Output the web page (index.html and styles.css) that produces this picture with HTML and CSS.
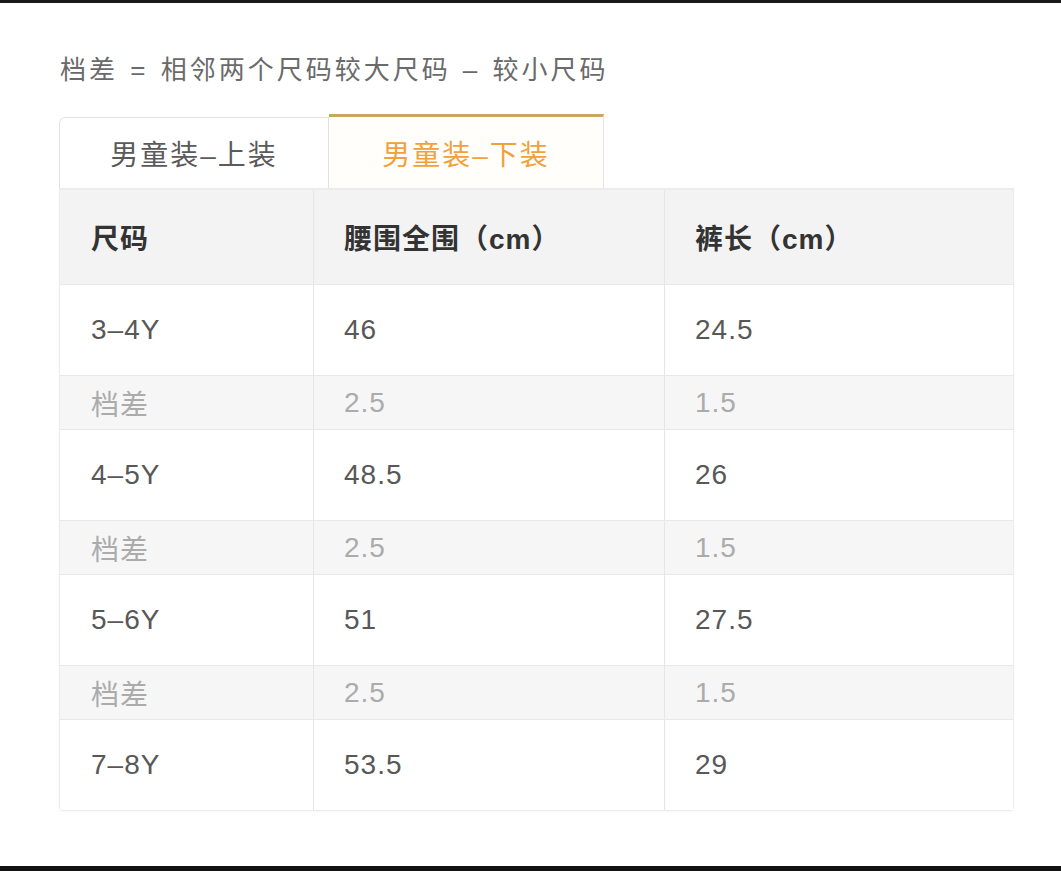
FILE: index.html
```html
<!DOCTYPE html>
<html lang="zh">
<head>
<meta charset="utf-8">
<title>尺码表</title>
<link rel="stylesheet" href="styles.css">
</head>
<body>
<main class="page">
  <p class="note">档差 = 相邻两个尺码较大尺码 – 较小尺码</p>
  <div class="tabs">
    <div class="tab">男童装–上装</div>
    <div class="tab active">男童装–下装</div>
  </div>
  <div class="table">
    <div class="row head">
      <div class="cell">尺码</div>
      <div class="cell">腰围全围（cm）</div>
      <div class="cell">裤长（cm）</div>
    </div>
    <div class="row data">
      <div class="cell">3–4Y</div>
      <div class="cell">46</div>
      <div class="cell">24.5</div>
    </div>
    <div class="row diff">
      <div class="cell">档差</div>
      <div class="cell">2.5</div>
      <div class="cell">1.5</div>
    </div>
    <div class="row data">
      <div class="cell">4–5Y</div>
      <div class="cell">48.5</div>
      <div class="cell">26</div>
    </div>
    <div class="row diff">
      <div class="cell">档差</div>
      <div class="cell">2.5</div>
      <div class="cell">1.5</div>
    </div>
    <div class="row data">
      <div class="cell">5–6Y</div>
      <div class="cell">51</div>
      <div class="cell">27.5</div>
    </div>
    <div class="row diff">
      <div class="cell">档差</div>
      <div class="cell">2.5</div>
      <div class="cell">1.5</div>
    </div>
    <div class="row data last">
      <div class="cell">7–8Y</div>
      <div class="cell">53.5</div>
      <div class="cell">29</div>
    </div>
  </div>
</main>
<div class="bottom-bar"></div>
</body>
</html>
```
FILE: styles.css
```css
* { box-sizing: border-box; }
html, body { margin: 0; padding: 0; }
body {
  width: 1061px;
  height: 871px;
  background: #fff;
  border-top: 3px solid #1a1a1a;
  display: flex;
  flex-direction: column;
  font-family: "Liberation Sans", "Noto Sans CJK SC", sans-serif;
  overflow: hidden;
}
.page {
  flex: 1;
  padding: 51px 0 0 59px;
}
.note {
  margin: 0;
  font-size: 26px;
  line-height: 32px;
  letter-spacing: 3px;
  word-spacing: 2px;
  color: #6a6a6a;
  padding-left: 1px;
}
.tabs {
  display: flex;
  align-items: flex-end;
  margin-top: 28px;
  height: 74px;
}
.tab {
  width: 270px;
  height: 71px;
  border: 1px solid #e2e2e2;
  border-bottom: none;
  border-radius: 6px 0 0 0;
  display: flex;
  align-items: center;
  justify-content: center;
  font-size: 28px;
  letter-spacing: 2px;
  color: #5a5a5a;
  background: #fff;
}
.tab.active {
  width: 275px;
  height: 74px;
  border: none;
  border-top: 3px solid #c8a760;
  border-right: 1px solid #e6e6e6;
  border-radius: 0;
  color: #f2a03a;
  background: #fffefb;
}
.table {
  width: 955px;
  border: 1px solid #ececec;
  border-top: 2px solid #ececec;
  box-shadow: 0 1px 2px rgba(0,0,0,0.04);
  border-radius: 0 0 4px 4px;
}
.row {
  display: grid;
  grid-template-columns: 253px 351px 1fr;
  border-top: 1px solid #e8e8e8;
}
.row:first-child { border-top: none; }
.cell {
  display: flex;
  align-items: center;
  padding-left: 30px;
  border-left: 1px solid #e6e6e6;
  font-size: 28px;
  letter-spacing: 1px;
  color: #585858;
}
.cell:first-child { border-left: none; padding-left: 31px; }
.head { height: 94px; background: #f3f3f3; }
.head .cell { font-weight: bold; color: #333; }
.data { height: 91px; background: #fff; }
.diff { height: 54px; background: #f6f6f6; }
.diff .cell { color: #ababab; }
.bottom-bar {
  height: 5px;
  background: #111;
  flex: none;
}
```
